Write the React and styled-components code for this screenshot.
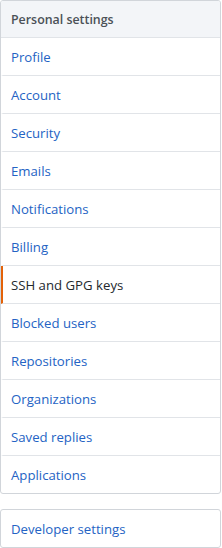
import styled, { createGlobalStyle } from "styled-components";

const GlobalStyle = createGlobalStyle`
  body {
    margin: 0;
    background: #fff;
    font-family: "Open Sans", "Noto Sans", sans-serif;
  }
`;

const Sidebar = styled.nav`
  width: 221px;
  display: flex;
  flex-direction: column;
  gap: 15px;
`;

const Menu = styled.div`
  border: 1px solid #d1d5da;
  border-radius: 3px;
  display: flex;
  flex-direction: column;
  overflow: hidden;
`;

const Heading = styled.div`
  background: #f3f5f8;
  color: #4b5157;
  font-size: 12.4px;
  font-weight: 600;
  line-height: 20px;
  padding: 9px 10px 7px;
  border-bottom: 1px solid #e1e4e8;
`;

const Item = styled.a`
  display: block;
  padding: 9px 10px 7px 8px;
  font-size: 13.2px;
  line-height: 21px;
  color: ${p => (p.$selected ? "#24292e" : "#2463c4")};
  font-weight: ${p => (p.$selected ? 500 : 400)};
  text-decoration: none;
  border-bottom: 1px solid #e1e4e8;
  border-left: 2px solid ${p => (p.$selected ? "#e36209" : "transparent")};
  &:last-child {
    border-bottom: none;
  }
`;

const items = [
  "Profile",
  "Account",
  "Security",
  "Emails",
  "Notifications",
  "Billing",
  "SSH and GPG keys",
  "Blocked users",
  "Repositories",
  "Organizations",
  "Saved replies",
  "Applications",
];

export default function App() {
  return (
    <>
      <GlobalStyle />
      <Sidebar>
        <Menu>
          <Heading>Personal settings</Heading>
          {items.map(name => (
            <Item key={name} href="#" $selected={name === "SSH and GPG keys"}>
              {name}
            </Item>
          ))}
        </Menu>
        <Menu>
          <Item href="#">Developer settings</Item>
        </Menu>
      </Sidebar>
    </>
  );
}
